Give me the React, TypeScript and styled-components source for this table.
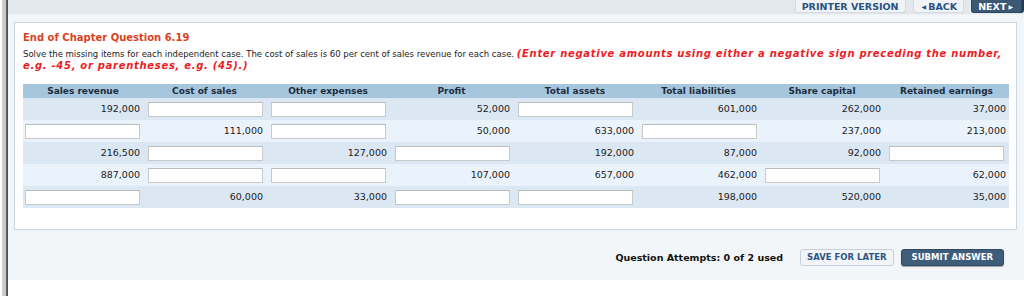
import React from "react";
import styled, { createGlobalStyle } from "styled-components";

const GlobalStyle = createGlobalStyle`
  html, body {
    margin: 0;
    padding: 0;
    background: #ffffff;
  }
  body {
    font-family: "DejaVu Sans", Verdana, sans-serif;
    color: #222;
  }
`;

/* ================== DATA ================== */

const COLUMNS = [
  "Sales revenue",
  "Cost of sales",
  "Other expenses",
  "Profit",
  "Total assets",
  "Total liabilities",
  "Share capital",
  "Retained earnings",
];

// null = answer box
const ROWS: (string | null)[][] = [
  ["192,000", null, null, "52,000", null, "601,000", "262,000", "37,000"],
  [null, "111,000", null, "50,000", "633,000", null, "237,000", "213,000"],
  ["216,500", null, "127,000", null, "192,000", "87,000", "92,000", null],
  ["887,000", null, null, "107,000", "657,000", "462,000", null, "62,000"],
  [null, "60,000", "33,000", null, null, "198,000", "520,000", "35,000"],
];

/* ================== STYLES ================== */

const Page = styled.div`
  display: flex;
  width: 1024px;
  height: 296px;
  overflow: hidden;
`;

const Rail = styled.div`
  width: 8px;
  flex: none;
  background: linear-gradient(
    to right,
    #ffffff 0,
    #ffffff 2px,
    #d2d2d2 2px,
    #c6c6c6 6px,
    #6a6a6a 6px,
    #4a4a4a 8px
  );
`;

const Main = styled.div`
  flex: 1;
  display: flex;
  flex-direction: column;
`;

const TopBar = styled.div`
  height: 14px;
  background: #e3e8ec;
  border-bottom: 1px solid #eef1f4;
  display: flex;
  justify-content: flex-end;
  align-items: flex-start;
  gap: 7px;
  padding-right: 2px;
`;

const TopButton = styled.div<{ $dark?: boolean }>`
  height: 12px;
  padding: 0 6px;
  display: flex;
  align-items: center;
  font-size: 9.5px;
  font-weight: bold;
  border-radius: 0 0 3px 3px;
  background: ${({ $dark }) => ($dark ? "#3b5874" : "#f1f4f7")};
  color: ${({ $dark }) => ($dark ? "#ffffff" : "#2b5282")};
  border: 1px solid ${({ $dark }) => ($dark ? "#2c4760" : "#d3dae2")};
  border-top: none;
  box-shadow: ${({ $dark }) => ($dark ? "2px 0 0 #24394f" : "none")};
`;

const Arrow = styled.span`
  font-size: 6px;
  margin: 0 2px;
`;

const Content = styled.div`
  background: #f3f6f9;
  padding: 7px 7px 0 6px;
  height: 265px;
  box-sizing: border-box;
  display: flex;
  flex-direction: column;
`;

const Panel = styled.div`
  background: #ffffff;
  border: 1px solid #ccd5e0;
  padding: 9px 5px 21px 8px;
`;

const Title = styled.h2`
  margin: 0 0 5px 0;
  font-size: 10px;
  font-weight: bold;
  color: #d9431e;
`;

const Instructions = styled.p`
  margin: 0 0 12px 0;
  font-size: 8.5px;
  line-height: 12px;
  color: #222;

  em {
    font-size: 10px;
    line-height: 12px;
    font-weight: bold;
    letter-spacing: 0.7px;
    color: #ee1b24;
  }
`;

const Table = styled.div`
  display: grid;
  grid-template-columns: 120px 123px 124px 123px 124px 123px 124px 125px;
`;

const HeaderCell = styled.div`
  background: #a6c6dd;
  height: 14px;
  line-height: 14px;
  text-align: center;
  font-size: 9px;
  font-weight: bold;
  color: #1c2c3c;
`;

const Cell = styled.div<{ $alt: boolean }>`
  background: ${({ $alt }) => ($alt ? "#eaf2fb" : "#dbe7f3")};
  height: 22px;
  display: flex;
  align-items: center;
  justify-content: flex-end;
  padding: 0 3px 0 5px;
  font-size: 9.5px;
  color: #222;
  box-sizing: border-box;
`;

const Value = styled.span`
  align-self: flex-start;
  margin-top: 5px;
`;

const AnswerBox = styled.input`
  width: 115px;
  height: 15px;
  box-sizing: border-box;
  border: 1px solid #c9c9c9;
  border-top-color: #bdbdbd;
  background: #ffffff;
  margin-top: 4px;
  margin-right: auto;
  align-self: flex-start;
  padding: 0;
`;

const Footer = styled.div`
  flex: 1;
  display: flex;
  justify-content: flex-end;
  align-items: center;
  padding: 4px 13px 0 0;
  gap: 7px;
`;

const Attempts = styled.div`
  font-size: 9.5px;
  font-weight: bold;
  color: #111;
  margin-right: 10px;
`;

const ActionButton = styled.div<{ $primary?: boolean }>`
  height: 15px;
  padding: 0 ${({ $primary }) => ($primary ? "10px" : "6px")};
  display: flex;
  align-items: center;
  font-size: 8.5px;
  font-weight: bold;
  border-radius: 3px;
  background: ${({ $primary }) => ($primary ? "#3d5d7a" : "#f2f5f8")};
  color: ${({ $primary }) => ($primary ? "#ffffff" : "#2c5585")};
  border: 1px solid ${({ $primary }) => ($primary ? "#2f4a63" : "#c6d0dc")};
  box-shadow: ${({ $primary }) => ($primary ? "0 1px 1px rgba(0,0,0,0.35)" : "none")};
`;

/* ================== COMPONENT ================== */

export default function App() {
  return (
    <>
      <GlobalStyle />
      <Page>
        <Rail />
        <Main>
          <TopBar>
            <TopButton>PRINTER VERSION</TopButton>
            <TopButton>
              <Arrow>◀</Arrow>BACK
            </TopButton>
            <TopButton $dark>
              NEXT<Arrow>▶</Arrow>
            </TopButton>
          </TopBar>

          <Content>
            <Panel>
              <Title>End of Chapter Question 6.19</Title>
              <Instructions>
                Solve the missing items for each independent case. The cost of sales is 60 per cent of
                sales revenue for each case.{" "}
                <em>
                  (Enter negative amounts using either a negative sign preceding the number, e.g. -45,
                  or parentheses, e.g. (45).)
                </em>
              </Instructions>

              <Table>
                {COLUMNS.map((c) => (
                  <HeaderCell key={c}>{c}</HeaderCell>
                ))}
                {ROWS.map((row, r) =>
                  row.map((v, c) => (
                    <Cell key={`${r}-${c}`} $alt={r % 2 === 1}>
                      {v === null ? <AnswerBox type="text" /> : <Value>{v}</Value>}
                    </Cell>
                  ))
                )}
              </Table>
            </Panel>

            <Footer>
              <Attempts>Question Attempts: 0 of 2 used</Attempts>
              <ActionButton>SAVE FOR LATER</ActionButton>
              <ActionButton $primary>SUBMIT ANSWER</ActionButton>
            </Footer>
          </Content>
        </Main>
      </Page>
    </>
  );
}
